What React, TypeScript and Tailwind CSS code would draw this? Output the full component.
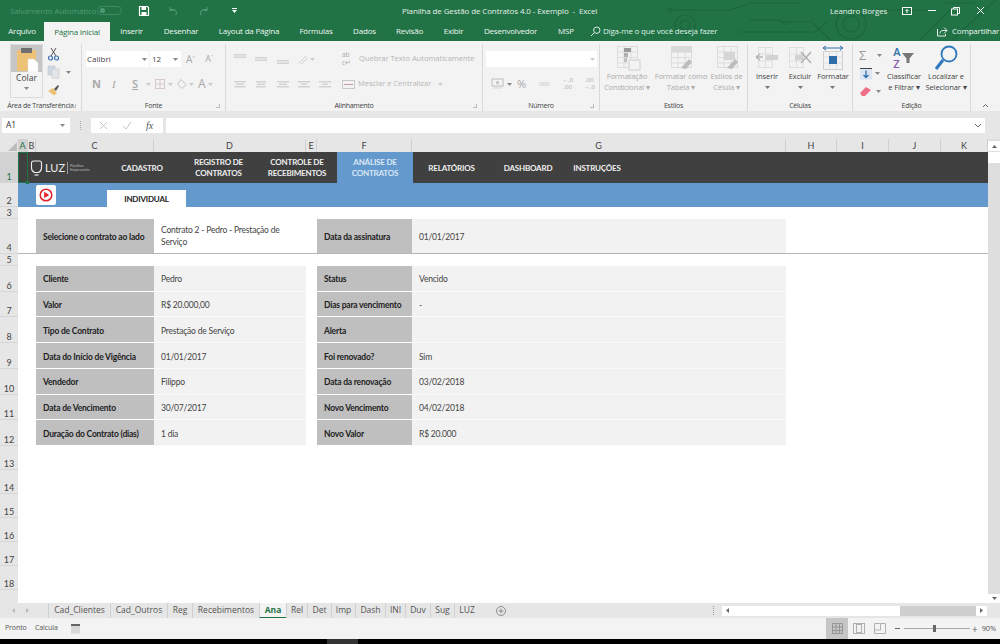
import type { ReactNode } from 'react';

function Box({ w = 14, h = 14, children }: { w?: number; h?: number; children: ReactNode }) {
  return (
    <svg width={w} height={h} viewBox={`0 0 ${w} ${h}`} fill="none" className="shrink-0">
      {children}
    </svg>
  );
}

function Caret({ className = 'text-[#888]' }: { className?: string }) {
  return (
    <svg width="5" height="3" viewBox="0 0 5 3" className={`shrink-0 ${className}`}>
      <path d="M0 0h5L2.5 3z" fill="currentColor" />
    </svg>
  );
}

function AlignLines({ pad = [0, 0, 0], y = 3 }: { pad?: number[]; y?: number }) {
  return (
    <Box w={14} h={12}>
      {pad.map((p, i) => (
        <rect key={i} x={1 + p} y={y + i * 2.5} width={12 - p * 2} height="1.5" fill="#d3d3d3" />
      ))}
    </Box>
  );
}

function TitleBar() {
  return (
    <div className="flex h-[21px] items-center whitespace-nowrap text-[8px] tracking-[-0.12px] text-white">
      <span className="ml-[10px] w-[87px] text-[#4f9a74]">Salvamento Automático</span>
      <span className="flex h-[9px] w-[25px] items-center rounded-full border border-[#3f8a63] pl-[2px]">
        <span className="h-[5px] w-[5px] rounded-full bg-[#4f9a74]" />
      </span>
      <span className="ml-[16px]">
        <Box w={12} h={12}>
          <path d="M1.5 1.5h8l1 1v8h-9z" stroke="#fff" strokeWidth="1.2" />
          <rect x="3.5" y="2" width="4.5" height="3" fill="#fff" />
          <rect x="3.5" y="7" width="5" height="3.5" fill="#fff" />
        </Box>
      </span>
      <span className="ml-[17px]">
        <Box w={12} h={12}>
          <path d="M3 2v3.5h3.5M3 5.5c2-2 6-1.5 6.5 2 .1 1-.3 2-1 2.5" stroke="#4f9a74" strokeWidth="1.1" />
        </Box>
      </span>
      <span className="ml-[19px]">
        <Box w={12} h={12}>
          <path d="M9 2v3.5H5.5M9 5.5c-2-2-6-1.5-6.5 2-.1 1 .3 2 1 2.5" stroke="#4f9a74" strokeWidth="1.1" />
        </Box>
      </span>
      <span className="ml-[22px] flex w-[5px] flex-col items-center gap-[1px]">
        <span className="h-[1px] w-[5px] bg-white" />
        <Caret className="text-white" />
      </span>
      <span className="ml-[165px] w-[428px] whitespace-pre text-[#e4efe8]">Planilha de Gestão de Contratos 4.0 - Exemplo  -  Excel</span>
      <span className="w-[60px] text-[#e4efe8]">Leandro Borges</span>
      <span className="ml-[11px]">
        <Box w={12} h={10}>
          <rect x="1.5" y="1.5" width="9" height="7" stroke="#fff" />
          <path d="M6 7V3.500M4.500 5 6 3.500 7.500 5" stroke="#fff" />
        </Box>
      </span>
      <span className="ml-[15px] h-[1px] w-[8px] bg-white" />
      <span className="ml-[14px]">
        <Box w={11} h={10}>
          <rect x="1.5" y="3" width="6" height="6" stroke="#fff" />
          <path d="M3.500 3V1.500h6v6H8" stroke="#fff" />
        </Box>
      </span>
      <span className="ml-[15px]">
        <Box w={9} h={9}>
          <path d="M1 1l7 7M8 1 1 8" stroke="#fff" />
        </Box>
      </span>
    </div>
  );
}

const tabs: [string, string][] = [
  ['Arquivo', 'w-[44px]'],
  ['Página Inicial', 'w-[66px]'],
  ['Inserir', 'w-[43px]'],
  ['Desenhar', 'w-[56px]'],
  ['Layout da Página', 'w-[80px]'],
  ['Fórmulas', 'w-[54px]'],
  ['Dados', 'w-[43px]'],
  ['Revisão', 'w-[47px]'],
  ['Exibir', 'w-[41px]'],
  ['Desenvolvedor', 'w-[73px]'],
  ['MSP', 'w-[38px]'],
];

function TabRow() {
  return (
    <div className="flex h-[20px] items-stretch whitespace-nowrap text-[8px] tracking-[-0.2px] text-[#eef5f0]">
      {tabs.map(([t, w]) => (
        <div
          key={t}
          className={`flex items-center justify-center ${w} ${
            t === 'Página Inicial' ? 'mt-[1px] bg-[#f3f3f3] text-[#217346]' : ''
          }`}
        >
          {t}
        </div>
      ))}
      <div className="ml-[5px] flex items-center gap-[2px]">
        <Box w={11} h={11}>
          <circle cx="6.800" cy="4.200" r="3.200" stroke="#dfeee5" />
          <path d="M4.400 6.600 1 10" stroke="#dfeee5" />
        </Box>
        <span className="w-[330px] text-[#dfeee5]">Diga-me o que você deseja fazer</span>
      </div>
      <div className="ml-[3px] flex items-center gap-[4px]">
        <Box w={12} h={11}>
          <path d="M8 1.500 11 4.500 8 7.500M11 4.500H7c-2 0-3 1.200-3 3M1.500 3v7h8V8" stroke="#e6f0ea" />
        </Box>
        <span className="text-[#eef5f0]">Compartilhar</span>
      </div>
    </div>
  );
}

function CircuitPattern() {
  return (
    <svg width="400" height="41" viewBox="0 0 400 41" fill="none" className="absolute right-0 top-0" stroke="#1b663c" strokeWidth="1.2">
      <circle cx="85" cy="25" r="10" />
      <circle cx="85" cy="25" r="5" />
      <circle cx="251" cy="24" r="15" />
      <circle cx="251" cy="24" r="8" />
      <path d="M70 10h60l22-7h48" />
      <path d="M140 32h75l12-10" />
      <path d="M230 40l-18-18h-30" />
      <path d="M275 10h60" />
      <path d="M320 40l32-32M352 40l44-40M345 3h30" />
      <path d="M150 20h30l6 5" />
      <circle cx="70" cy="10" r="2" />
    </svg>
  );
}

function Group({ w, label, launcher, children }: { w: string; label: string; launcher?: boolean; children: ReactNode }) {
  return (
    <div className={`relative flex flex-col border-r border-[#dadada] ${w}`}>
      <div className="flex-1">{children}</div>
      <div className="flex h-[10px] items-center justify-center whitespace-nowrap text-[7px] tracking-[-0.25px] text-[#444]">{label}</div>
      {launcher && (
        <span className="absolute bottom-[3px] right-[5px] h-[4px] w-[4px] border-b border-r border-[#bbb]" />
      )}
    </div>
  );
}

function Clipboard() {
  return (
    <Group w="w-[82px]" label="Área de Transferência" launcher>
      <div className="flex">
        <div className="ml-[10px] flex h-[54px] w-[33px] flex-col items-center border border-[#dcdcdc]">
          <div className="flex h-[27px] w-full items-center justify-center bg-[#c6c6c6]">
            <Box w={24} h={26}>
              <rect x="2" y="4" width="19" height="21" fill="#edc276" />
              <rect x="6" y="2" width="11" height="5" fill="#6f6f6f" />
              <path d="M13 13h6l4 4v9H13z" fill="#fff" stroke="#ddd" strokeWidth=".5" />
            </Box>
          </div>
          <span className="text-[8.500px] text-[#444]">Colar</span>
          <span className="mt-[2px]"><Caret /></span>
        </div>
        <div className="ml-[4px] mt-[3px] flex flex-col gap-[4px]">
          <Box w={13} h={14}>
            <path d="M4 1l5 8M9 1 4 9" stroke="#555" />
            <circle cx="3.500" cy="11" r="2" stroke="#3f72b5" strokeWidth="1.200" />
            <circle cx="9.500" cy="11" r="2" stroke="#3f72b5" strokeWidth="1.200" />
          </Box>
          <div className="flex items-center gap-[6px]">
            <Box w={13} h={14}>
              <rect x="1" y="1" width="7" height="9" fill="#cfd9e6" stroke="#c3c3c3" strokeWidth=".6" />
              <rect x="5" y="4" width="7" height="9" fill="#e3e7ec" stroke="#c3c3c3" strokeWidth=".6" />
            </Box>
            <Caret />
          </div>
          <Box w={13} h={13}>
            <path d="M1 8l5-3 4 5-3 2.500z" fill="#edc276" />
            <path d="M7 6l4-4 1 1-3 5z" fill="#555" />
          </Box>
        </div>
      </div>
    </Group>
  );
}

function Font() {
  return (
    <Group w="w-[144px]" label="Fonte" launcher>
      <div className="mt-[7px] flex h-[16px] items-stretch pl-[4px]">
        <div className="flex w-[63px] items-center justify-between bg-white pl-[1px] pr-[2px] text-[8px] text-[#444]">
          Calibri <Caret />
        </div>
        <div className="ml-[1px] flex w-[31px] items-center justify-between bg-white pl-[2px] pr-[3px] text-[8px] text-[#444]">
          12 <Caret />
        </div>
        <span className="ml-[5px] flex items-center text-[10px] text-[#a9a9a9]">A<sup className="text-[5px]">^</sup></span>
        <span className="ml-[10px] flex items-center text-[9px] text-[#a9a9a9]">A<sup className="text-[5px]">ˇ</sup></span>
      </div>
      <div className="mt-[9px] flex h-[16px] items-center pl-[10px] text-[#a9a9a9]">
        <span className="w-[20px] text-[11px] font-bold">N</span>
        <span className="w-[20px] font-['Liberation_Serif',serif] text-[11px] italic">I</span>
        <span className="w-[11px] text-[11px] font-semibold underline">S</span>
        <span className="ml-[3px]"><Caret className="text-[#ccc]" /></span>
        <span className="ml-[3px]">
          <Box w={12} h={12}>
            <rect x="1.500" y="1.500" width="9" height="9" stroke="#d5c6ca" />
            <path d="M6 1.500v9M1.500 6h9" stroke="#d5c6ca" />
          </Box>
        </span>
        <span className="ml-[2px]"><Caret className="text-[#ccc]" /></span>
        <span className="ml-[3px]">
          <Box w={12} h={12}>
            <path d="M5 1.500 10 6.500 6 10.500 1.500 6z" stroke="#c4c4c4" />
          </Box>
        </span>
        <span className="ml-[1px]"><Caret className="text-[#ccc]" /></span>
        <span className="ml-[4px] text-[12px]">A</span>
        <span className="ml-[2px]"><Caret className="text-[#ccc]" /></span>
      </div>
    </Group>
  );
}

function Alignment() {
  return (
    <Group w="w-[257px]" label="Alinhamento" launcher>
      <div className="mt-[7px] flex h-[16px] items-center pl-[7px]">
        <span className="w-[21px]"><AlignLines pad={[0, 0]} y={1} /></span>
        <span className="w-[22px]"><AlignLines pad={[0, 0]} y={4} /></span>
        <span className="w-[21px]"><AlignLines pad={[0, 0]} y={7} /></span>
        <span className="flex w-[32px] items-center gap-[1px]">
          <Box w={12} h={12}>
            <path d="M1.500 10.500 9 3M4 11 10.500 5" stroke="#d0d0d0" />
          </Box>
          <Caret className="text-[#ccc]" />
        </span>
        <span className="ml-[13px] w-[17px] text-[6.500px] leading-[8px] text-[#a9a9a9]">ab<br />c↵</span>
        <span className="whitespace-nowrap text-[7.500px] text-[#b5b5b5]">Quebrar Texto Automaticamente</span>
      </div>
      <div className="mt-[9px] flex h-[16px] items-center pl-[7px]">
        <span className="w-[21px]"><AlignLines pad={[0, 2, 0]} /></span>
        <span className="w-[22px]"><AlignLines pad={[1, 2, 1]} /></span>
        <span className="w-[21px]"><AlignLines pad={[0, 2, 0]} /></span>
        <span className="w-[21px]"><AlignLines pad={[0, 3, 0]} /></span>
        <span className="w-[24px]"><AlignLines pad={[0, 3, 0]} /></span>
        <span className="w-[16px]">
          <Box w={13} h={11}>
            <rect x=".5" y="1.500" width="12" height="8" stroke="#c8c8c8" />
            <path d="M2 5.500h9" stroke="#c39aa2" />
          </Box>
        </span>
        <span className="whitespace-nowrap text-[7.500px] text-[#b5b5b5]">Mesclar e Centralizar</span>
        <span className="ml-[7px]"><Caret className="text-[#ccc]" /></span>
      </div>
    </Group>
  );
}

function Numero() {
  return (
    <Group w="w-[117px]" label="Número" launcher>
      <div className="ml-[3px] mt-[7px] flex h-[16px] w-[111px] items-center justify-end bg-white pr-[2px]">
        <Caret className="text-[#ccc]" />
      </div>
      <div className="mt-[9px] flex h-[16px] items-center pl-[8px] text-[#a9a9a9]">
        <Box w={13} h={12}>
          <rect x="1" y="1" width="11" height="7" stroke="#bdbdbd" />
          <circle cx="6.500" cy="4.500" r="1.500" fill="#bdbdbd" />
          <path d="M2 10h9" stroke="#d5d5d5" />
        </Box>
        <span className="ml-[3px]"><Caret /></span>
        <span className="ml-[5px] w-[23px] text-[11px]">%</span>
        <span className="w-[17px] text-[6px] text-[#bdbdbd]">000</span>
        <span className="w-[25px] text-center text-[6px] leading-[7px]">←,0<br />,00</span>
        <span className="w-[20px] text-center text-[6px] leading-[7px]">,00<br />→,0</span>
      </div>
    </Group>
  );
}

function BigBtn({ w, icon, lines, dim }: { w: string; icon: ReactNode; lines: string[]; dim?: boolean }) {
  return (
    <div className={`flex flex-col items-center ${w}`}>
      <div className="mt-[2px] flex h-[24px] items-center justify-center">{icon}</div>
      <div className={`mt-[1px] flex flex-col items-center text-[7.500px] leading-[11px] tracking-[-0.1px] ${dim ? 'text-[#ababab]' : 'text-[#444]'}`}>
        {lines.map((l) => (
          <span key={l} className="whitespace-nowrap">
            {l}
          </span>
        ))}
        {lines.length === 1 && <span className="mt-[4px]"><Caret className="text-[#777]" /></span>}
      </div>
    </div>
  );
}

function TableIcon({ children }: { children?: ReactNode }) {
  return (
    <Box w={28} h={26}>
      <rect x="4.500" y="1.500" width="20" height="21" stroke="#dcdcdc" />
      <path d="M4.500 7h20M4.500 12.500h20M4.500 18h20M11 1.500v21M18 1.500v21" stroke="#dcdcdc" />
      {children}
    </Box>
  );
}

function Estilos() {
  return (
    <Group w="w-[148px]" label="Estilos">
      <div className="flex">
        <BigBtn
          w="w-[54px]"
          dim
          lines={['Formatação', 'Condicional ▾']}
          icon={
            <TableIcon>
              <rect x="11" y="3" width="7" height="4" fill="#9a9a9a" />
              <rect x="11" y="8" width="4" height="4" fill="#b0b0b0" />
              <rect x="11" y="13" width="3" height="4" fill="#c0c0c0" />
              <rect x="16" y="15" width="11" height="10" fill="#f3f3f3" stroke="#cfcfcf" />
            </TableIcon>
          }
        />
        <BigBtn
          w="w-[54px]"
          dim
          lines={['Formatar como', 'Tabela ▾']}
          icon={
            <TableIcon>
              <rect x="4.500" y="1.500" width="20" height="6" fill="#d9d9d9" />
              <path d="M14 23l8-9 3 3-6 7z" fill="#bcbcbc" />
            </TableIcon>
          }
        />
        <BigBtn
          w="w-[37px]"
          dim
          lines={['Estilos de', 'Célula ▾']}
          icon={
            <TableIcon>
              <rect x="11" y="7" width="11" height="8" fill="#d5d5d5" />
              <path d="M14 23l8-9 3 3-6 7z" fill="#bcbcbc" />
            </TableIcon>
          }
        />
      </div>
    </Group>
  );
}

function Celulas() {
  return (
    <Group w="w-[105px]" label="Células">
      <div className="flex">
        <BigBtn
          w="w-[38px]"
          lines={['Inserir']}
          icon={
            <Box w={26} h={26}>
              <rect x="4.500" y="2.500" width="14" height="20" stroke="#dedede" />
              <path d="M4.500 9h14M4.500 16h14M11.500 2.500v20" stroke="#dedede" />
              <path d="M2 12h7M2 12l4-3M2 12l4 3" stroke="#b5b5b5" strokeWidth="1.500" />
              <rect x="12" y="10" width="12" height="5" fill="#d2d2d2" />
            </Box>
          }
        />
        <BigBtn
          w="w-[28px]"
          lines={['Excluir']}
          icon={
            <Box w={26} h={26}>
              <rect x="2.500" y="2.500" width="14" height="20" stroke="#dedede" />
              <path d="M2.500 9h14M2.500 16h14M9.500 2.500v20" stroke="#dedede" />
              <rect x="8" y="10" width="8" height="5" fill="#d2d2d2" />
              <path d="M14 7l10 11M24 7 14 18" stroke="#b0b0b0" strokeWidth="1.500" />
            </Box>
          }
        />
        <BigBtn
          w="w-[38px]"
          lines={['Formatar']}
          icon={
            <Box w={24} h={26}>
              <path d="M2 3h20M2 3l3-2M2 3l3 2M22 3l-3-2M22 3l-3 2" stroke="#2f6ea8" />
              <rect x="2.500" y="6.500" width="19" height="18" stroke="#cfcfcf" />
              <path d="M8.500 6.500v18M15.500 6.500v18M2.500 12h19M2.500 18h19" stroke="#e0e0e0" />
              <rect x="8" y="11" width="8" height="8" fill="#2f6ea8" />
            </Box>
          }
        />
      </div>
    </Group>
  );
}

function Edicao() {
  return (
    <Group w="w-[118px]" label="Edição">
      <div className="flex">
        <div className="ml-[6px] mt-[2px] flex w-[24px] flex-col gap-[2px]">
          <div className="flex h-[18px] items-center gap-[5px]">
            <span className="w-[13px] text-[13px] leading-none text-[#9a9a9a]">Σ</span>
            <Caret />
          </div>
          <div className="flex h-[15px] items-center gap-[2px]">
            <Box w={14} h={14}>
              <rect x="1" y="1.500" width="12" height="11" fill="#dce6f2" />
              <path d="M1 1.500h12" stroke="#444" />
              <path d="M7 3.500v7M4.500 8 7 10.500 9.500 8" stroke="#2f6ea8" strokeWidth="1.300" />
            </Box>
            <Caret />
          </div>
          <div className="flex h-[17px] items-center gap-[4px]">
            <Box w={13} h={13}>
              <path d="M1 8l6-6 5 3-6 6H3z" fill="#ee6f88" />
            </Box>
            <Caret />
          </div>
        </div>
        <BigBtn
          w="w-[42px]"
          lines={['Classificar', 'e Filtrar ▾']}
          icon={
            <div className="flex items-center">
              <span className="flex flex-col text-[11px] font-semibold leading-[12px]">
                <span className="text-[#2f6ea8]">A</span>
                <span className="text-[#8457b0]">Z</span>
              </span>
              <Box w={14} h={14}>
                <path d="M1 2h12L8.500 7.500V12h-3V7.500z" fill="#777" />
              </Box>
            </div>
          }
        />
        <BigBtn
          w="w-[42px]"
          lines={['Localizar e', 'Selecionar ▾']}
          icon={
            <Box w={26} h={26}>
              <circle cx="16" cy="9" r="7.500" stroke="#2f78bd" strokeWidth="1.800" />
              <path d="M10 15 3 24" stroke="#2f78bd" strokeWidth="3" />
            </Box>
          }
        />
      </div>
    </Group>
  );
}

function Ribbon() {
  return (
    <div className="flex h-[70px] bg-[#f3f3f3] pt-[3px]">
      <Clipboard />
      <Font />
      <Alignment />
      <Numero />
      <Estilos />
      <Celulas />
      <Edicao />
      <div className="flex flex-1 items-end justify-center pb-[3px]">
        <Box w={7} h={5}>
          <path d="M1 4l2.500-2.500L6 4" stroke="#666" />
        </Box>
      </div>
    </div>
  );
}

function FormulaBar() {
  return (
    <div className="flex h-[28px] items-start bg-[#e6e6e6] pt-[7px]">
      <div className="ml-[2px] flex h-[15px] w-[68px] items-center justify-between bg-white pl-[4px] pr-[5px] text-[8.500px] text-[#333]">
        A1 <Caret />
      </div>
      <span className="ml-[10px] mt-[3px] h-[9px] w-[1px] border-l border-dotted border-[#aaa]" />
      <div className="ml-[10px] flex h-[15px] w-[72px] items-center bg-white">
        <span className="ml-[8px]">
          <Box w={9} h={9}>
            <path d="M1 1l7 7M8 1 1 8" stroke="#c5c5c5" />
          </Box>
        </span>
        <span className="ml-[14px]">
          <Box w={10} h={9}>
            <path d="M1 5l3 3 5-7" stroke="#c5c5c5" />
          </Box>
        </span>
        <span className="ml-[14px] font-['Liberation_Serif',serif] text-[10px] italic text-[#555]">fx</span>
      </div>
      <div className="ml-[3px] flex h-[15px] w-[819px] items-center justify-end bg-white pr-[3px]">
        <Box w={8} h={5}>
          <path d="M1 1l3 3 3-3" stroke="#666" />
        </Box>
      </div>
    </div>
  );
}

const nav: [string, string, string][] = [
  ['CADASTRO', '', 'w-[76px]'],
  ['REGISTRO DE', 'CONTRATOS', 'w-[77px]'],
  ['CONTROLE DE', 'RECEBIMENTOS', 'w-[80px]'],
  ['ANÁLISE DE', 'CONTRATOS', 'w-[76px] bg-[#6499cd] !text-[#dbe8f5]'],
  ['RELATÓRIOS', '', 'w-[77px]'],
  ['DASHBOARD', '', 'w-[76px]'],
  ['INSTRUÇÕES', '', 'w-[62px]'],
];

function NavRow() {
  return (
    <div className="col-span-10 flex bg-[#404040] font-['Lato',sans-serif] text-[8px] font-bold leading-[11px] tracking-[-0.2px] text-[#efefef]">
      <div className="flex w-[76px] shrink-0 items-center pl-[2px]">
        <Box w={13} h={18}>
          <path d="M3.500 2h6a2 2 0 0 1 2 2v5a5 5 0 0 1-3 4.500h-4a5 5 0 0 1-3-4.500V4a2 2 0 0 1 2-2z" stroke="#eee" strokeWidth="1.100" />
          <path d="M4.500 16h4" stroke="#eee" strokeWidth="1.200" />
        </Box>
        <span className="ml-[2px] text-[11px] font-normal tracking-normal text-[#eee]">LUZ</span>
        <span className="ml-[2px] h-[12px] w-[1px] bg-[#999]" />
        <span className="ml-[2px] text-[3.500px] font-normal leading-[4px] tracking-normal text-[#bbb]">Planilhas<br />Empresariais</span>
      </div>
      {nav.map(([a, b, w]) => (
        <div key={a} className={`flex flex-col items-center justify-center whitespace-nowrap pt-[1px] ${w}`}>
          <span>{a}</span>
          {b && <span>{b}</span>}
        </div>
      ))}
    </div>
  );
}

const rows: [string, string, string, string][] = [
  ['Cliente', 'Pedro', 'Status', 'Vencido'],
  ['Valor', 'R$ 20.000,00', 'Dias para vencimento', '-'],
  ['Tipo de Contrato', 'Prestação de Serviço', 'Alerta', ''],
  ['Data do Início de Vigência', '01/01/2017', 'Foi renovado?', 'Sim'],
  ['Vendedor', 'Filippo', 'Data da renovação', '03/02/2018'],
  ['Data de Vencimento', '30/07/2017', 'Novo Vencimento', '04/02/2018'],
  ['Duração do Contrato (dias)', '1 dia', 'Novo Valor', 'R$ 20.000'],
];

const colHeads: [string, string][] = [
  ['A', 'bg-[#d2d2d2] text-[#217346]'],
  ['B', ''],
  ['C', ''],
  ['D', ''],
  ['E', ''],
  ['F', ''],
  ['G', ''],
  ['H', ''],
  ['I', ''],
  ['J', ''],
  ['K', ''],
];

function RowHead({ n, on }: { n: number; on?: boolean }) {
  return (
    <div
      className={`flex items-end justify-center border-b border-[#d6d6d6] font-['Lato',sans-serif] text-[9px] leading-[11px] ${
        on ? 'bg-[#d2d2d2] text-[#217346]' : 'bg-[#e6e6e6] text-[#444]'
      }`}
    >
      {n}
    </div>
  );
}

const labelCls = 'flex items-center bg-[#bfbfbf] pl-[7px] pt-[3px] text-[8.500px] font-bold tracking-[-0.2px] text-[#222]';
const valueCls = 'flex items-center bg-[#f2f2f2] pl-[7px] pt-[3px] text-[8.500px] tracking-[-0.2px] text-[#444]';

function Sheet() {
  return (
    <div className="flex min-h-0 flex-1">
      <div className="grid flex-1 grid-cols-[18px_10px_8px_118px_152px_11px_95px_374px_51px_52px_52px_47px] grid-rows-[13px_31px_24px_12px_35px_12px_repeat(7,25.71px)_repeat(6,24px)_1fr] bg-white font-['Lato',sans-serif]">
        <div className="flex items-end justify-end bg-[#e6e6e6] pb-[1px] pr-[1px]">
          <svg width="9" height="9" viewBox="0 0 9 9">
            <path d="M9 0v9H0z" fill="#bdbdbd" />
          </svg>
        </div>
        {colHeads.map(([c, cls]) => (
          <div key={c} className={`flex items-center justify-center border-r border-[#d0d0d0] text-[9px] ${cls || 'bg-[#e6e6e6] text-[#444]'}`}>
            {c}
          </div>
        ))}

        <RowHead n={1} on />
        <div className="relative border border-[#217346] bg-[#404040]">
          <span className="absolute -bottom-[2px] -right-[2px] h-[3px] w-[3px] bg-[#217346]" />
        </div>
        <NavRow />

        <RowHead n={2} />
        <div className="col-span-11 flex bg-[#6499cd]">
          <div className="ml-[18px] mt-[2px] flex h-[20px] w-[20px] items-center justify-center rounded-[2px] bg-white">
            <Box w={14} h={14}>
              <circle cx="7" cy="7" r="5.800" stroke="#e2232b" strokeWidth="1.500" />
              <path d="M5.200 3.800v6.400L10.200 7z" fill="#e2232b" />
            </Box>
          </div>
          <div className="ml-[51px] mt-[7px] flex h-[17px] w-[79px] items-center justify-center bg-white text-[8px] font-bold tracking-[-0.2px] text-[#222]">
            INDIVIDUAL
          </div>
        </div>

        <RowHead n={3} />
        <div className="col-span-11" />

        <RowHead n={4} />
        <div className="col-span-2 border-b border-[#b5b5b5]" />
        <div className={`${labelCls} border-b border-[#b5b5b5]`}>Selecione o contrato ao lado</div>
        <div className="flex items-center border-b border-[#b5b5b5] bg-white pl-[7px] pr-[20px] pt-[1px] text-[8.500px] leading-[11.500px] tracking-[-0.2px] text-[#444]">
          Contrato 2 - Pedro - Prestação de Serviço
        </div>
        <div className="border-b border-[#b5b5b5]" />
        <div className={`${labelCls} border-b border-[#b5b5b5]`}>Data da assinatura</div>
        <div className={`${valueCls} border-b border-[#b5b5b5]`}>01/01/2017</div>
        <div className="col-span-4 border-b border-[#b5b5b5]" />

        <RowHead n={5} />
        <div className="col-span-11" />

        {rows.map(([a, b, c, d], i) => (
          <div key={a} className="contents">
            <RowHead n={6 + i} />
            <div className="col-span-2" />
            <div className={`${labelCls} border-b-[1.500px] border-white`}>{a}</div>
            <div className={`${valueCls} border-b border-[#f9f9f9]`}>{b}</div>
            <div />
            <div className={`${labelCls} border-b-[1.500px] border-white`}>{c}</div>
            <div className={`${valueCls} border-b border-[#f9f9f9]`}>{d}</div>
            <div className="col-span-4" />
          </div>
        ))}

        {[13, 14, 15, 16, 17, 18].map((n) => (
          <div key={n} className="contents">
            <RowHead n={n} />
            <div className="col-span-11" />
          </div>
        ))}
        <div className="bg-[#e6e6e6]" />
        <div className="col-span-11" />
      </div>

      <div className="flex w-[12px] flex-col bg-[#dedede] pt-[2px]">
        <div className="flex h-[10px] items-center justify-center bg-white">
          <Caret className="rotate-180 text-[#666]" />
        </div>
        <div className="mt-[1px] h-[11px] bg-white" />
        <div className="flex-1" />
        <div className="flex h-[9px] items-center justify-center bg-white">
          <Caret className="text-[#666]" />
        </div>
      </div>
    </div>
  );
}

const sheets: [string, string][] = [
  ['Cad_Clientes', 'w-[62px]'],
  ['Cad_Outros', 'w-[57px]'],
  ['Reg', 'w-[25px]'],
  ['Recebimentos', 'w-[67px]'],
  ['Ana', 'w-[27px]'],
  ['Rel', 'w-[21px]'],
  ['Det', 'w-[24px]'],
  ['Imp', 'w-[24px]'],
  ['Dash', 'w-[30px]'],
  ['INI', 'w-[20px]'],
  ['Duv', 'w-[25px]'],
  ['Sug', 'w-[24px]'],
  ['LUZ', 'w-[25px]'],
];

function SheetTabs() {
  return (
    <div className="flex h-[15px] items-stretch bg-[#e6e6e6] text-[8.500px] text-[#555]">
      <div className="flex w-[48px] items-center gap-[9px] pl-[11px]">
        <Caret className="rotate-90 text-[#bbb]" />
        <Caret className="-rotate-90 text-[#bbb]" />
      </div>
      {sheets.map(([s, w]) => (
        <div
          key={s}
          className={`flex items-center justify-center border-l border-[#d0d0d0] ${w} ${
            s === 'Ana' ? 'border-b border-b-[#217346] bg-[#f3f3f3] font-bold text-[#217346]' : ''
          }`}
        >
          {s}
        </div>
      ))}
      <div className="ml-[17px] flex items-center">
        <Box w={10} h={10}>
          <circle cx="5" cy="5" r="4.500" stroke="#777" strokeWidth=".8" />
          <path d="M5 2.500v5M2.500 5h5" stroke="#777" strokeWidth=".8" />
        </Box>
      </div>
      <div className="ml-[207px] flex items-center">
        <span className="h-[9px] border-l border-dotted border-[#999]" />
      </div>
      <div className="ml-[8px] flex h-[10px] w-[265px] self-center bg-[#cfcfcf]">
        <div className="flex w-[10px] items-center justify-center bg-white">
          <Caret className="rotate-90 text-[#666]" />
        </div>
        <div className="w-[168px] bg-white" />
        <div className="flex-1" />
        <div className="flex w-[11px] items-center justify-center bg-white">
          <Caret className="-rotate-90 text-[#666]" />
        </div>
      </div>
    </div>
  );
}

function StatusBar() {
  return (
    <div className="flex h-[21px] items-center bg-[#f3f3f3] text-[7px] tracking-[-0.1px] text-[#555]">
      <span className="ml-[5px] w-[30px]">Pronto</span>
      <span className="w-[35px]">Calcula</span>
      <Box w={11} h={11}>
        <rect x="1" y="2" width="9" height="8.500" fill="#d8d8d8" />
        <rect x="1" y="1" width="9" height="2" fill="#666" />
      </Box>
      <div className="ml-[745px] flex h-full w-[22px] items-center justify-center bg-[#c6c6c6]">
        <Box w={11} h={11}>
          <path d="M.5.500h10v10H.5zM.5 4h10M.5 7.500h10M4 .5v10M7.500 .5v10" stroke="#8c8c8c" strokeWidth=".8" />
        </Box>
      </div>
      <span className="ml-[5px]">
        <Box w={12} h={11}>
          <rect x=".5" y=".5" width="11" height="10" stroke="#b0b0b0" />
          <rect x="3.500" y="1.500" width="5" height="8" stroke="#b0b0b0" />
        </Box>
      </span>
      <span className="ml-[9px]">
        <Box w={12} h={11}>
          <path d="M.5 .5h11v10H.5zM.5 7h6V.5" stroke="#b0b0b0" />
        </Box>
      </span>
      <span className="ml-[9px] h-[1px] w-[5px] bg-[#666]" />
      <div className="relative ml-[4px] h-[1px] w-[66px] bg-[#a8a8a8]">
        <span className="absolute -top-[3px] left-[29px] h-[7px] w-[3px] bg-[#666]" />
      </div>
      <span className="ml-[2px] text-[10px] leading-none text-[#666]">+</span>
      <span className="ml-[4px] text-[7.500px]">90%</span>
    </div>
  );
}

export default function App() {
  return (
    <div className="flex h-[644px] w-[1000px] flex-col overflow-hidden bg-black font-['Open_Sans',sans-serif]">
      <div className="relative bg-[#217346]">
        <CircuitPattern />
        <div className="relative">
          <TitleBar />
          <TabRow />
        </div>
      </div>
      <Ribbon />
      <FormulaBar />
      <Sheet />
      <SheetTabs />
      <StatusBar />
      <div className="h-[5px] shrink-0 bg-black pl-[327px]">
        <div className="h-full w-[31px] bg-[#333]" />
      </div>
    </div>
  );
}
